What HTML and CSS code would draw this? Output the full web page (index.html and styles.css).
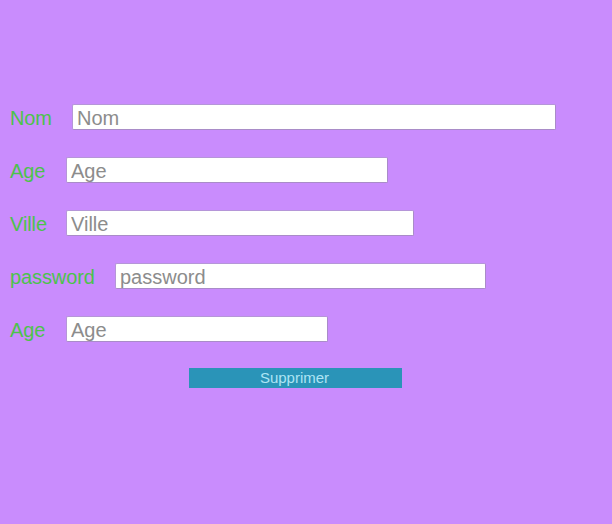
FILE: index.html
```html
<!DOCTYPE html>
<html>
<head>
<meta charset="utf-8">
<link rel="stylesheet" href="styles.css">
</head>
<body>
<form class="form">
  <div class="row"><label class="lbl lw-nom">Nom</label><input class="field w-nom" placeholder="Nom"></div>
  <div class="row"><label class="lbl lw-short">Age</label><input class="field w-age" placeholder="Age"></div>
  <div class="row"><label class="lbl lw-short">Ville</label><input class="field w-ville" placeholder="Ville"></div>
  <div class="row"><label class="lbl lw-pass">password</label><input class="field w-pass" placeholder="password"></div>
  <div class="row"><label class="lbl lw-short">Age</label><input class="field w-age2" placeholder="Age"></div>
  <div class="actions"><button type="button" class="btn">Supprimer</button></div>
</form>
</body>
</html>
```
FILE: styles.css
```css
html, body {
  margin: 0;
  padding: 0;
  background: #c98cfd;
  height: 100%;
}
body {
  font-family: "Liberation Sans", Arial, sans-serif;
}
.form {
  padding: 104px 0 0 10px;
  display: flex;
  flex-direction: column;
  gap: 27px;
}
.row {
  display: flex;
  align-items: center;
  height: 26px;
}
.lbl {
  color: #4cc24c;
  font-size: 20px;
  line-height: 26px;
  position: relative;
  top: 1px;
  flex: none;
  letter-spacing: -0.1px;
}
.lw-nom { width: 62px; }
.lw-short { width: 56px; }
.lw-pass { width: 105px; }
.field {
  box-sizing: border-box;
  height: 26px;
  border: 1px solid #b596d8;
  border-bottom-color: #a98cc8;
  border-right-color: #a98cc8;
  border-radius: 2px;
  background: #fff;
  font-family: "Liberation Sans", Arial, sans-serif;
  font-size: 20px;
  padding: 2px 4px 0;
  color: #333;
  outline: none;
  flex: none;
}
.field::placeholder {
  color: #8c8c8c;
}
.w-nom { width: 484px; }
.w-age { width: 322px; }
.w-ville { width: 348px; }
.w-pass { width: 371px; }
.w-age2 { width: 262px; }
.actions {
  padding-left: 179px;
  margin-top: -1px;
}
.btn {
  width: 213px;
  height: 20px;
  border: none;
  background: #2a94b8;
  color: #aee4f4;
  font-family: "Liberation Sans", Arial, sans-serif;
  font-size: 15px;
  line-height: 20px;
  padding: 0 2px 0 0;
  display: block;
}
```
